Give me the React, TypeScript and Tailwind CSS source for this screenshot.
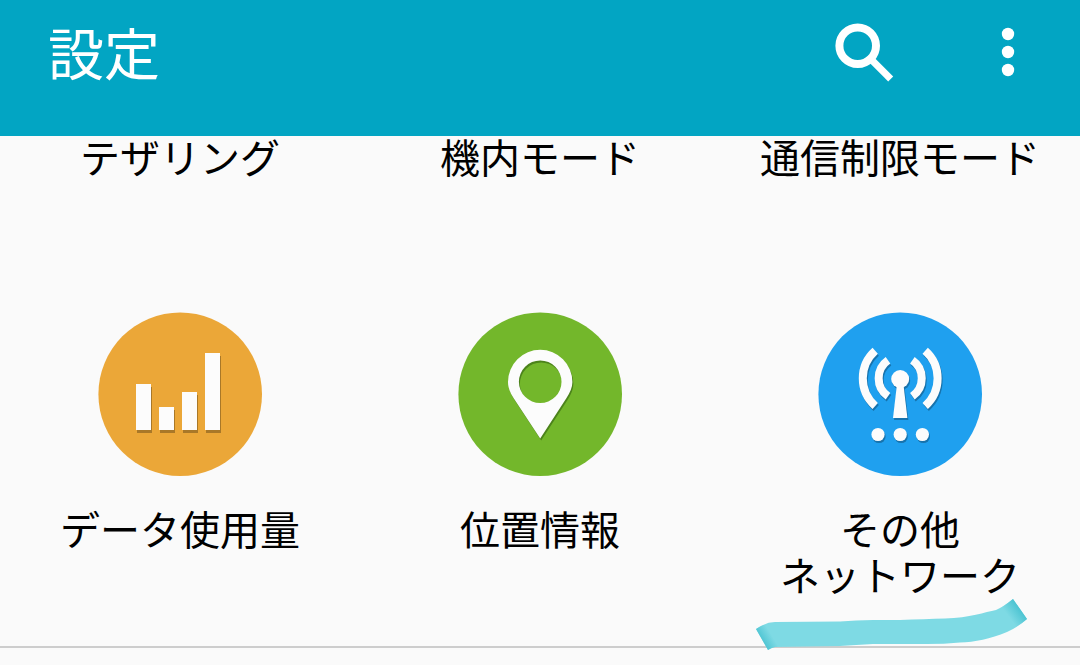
import type { ReactNode } from "react";

function SearchIcon() {
  return (
    <svg viewBox="0 0 72 72" className="size-[72px]" fill="none" stroke="#fff" aria-hidden="true">
      <circle cx="29.700" cy="29.700" r="18.300" strokeWidth="8" />
      <path d="M42 42.300 62.700 63" strokeWidth="7" />
    </svg>
  );
}

function MoreIcon() {
  return (
    <svg viewBox="0 0 72 72" className="size-[72px]" fill="#fff" aria-hidden="true">
      <circle cx="36" cy="18" r="6.2" />
      <circle cx="36" cy="36" r="6.2" />
      <circle cx="36" cy="54" r="6.2" />
    </svg>
  );
}

const bars = "M38 72h15v46h-15zM61 95h15v23h-15zM84 80h15v38h-15zM107 41h15v77h-15z";

function DataUsageIcon() {
  return (
    <svg viewBox="0 0 164 164" className="size-[164px]" aria-hidden="true">
      <circle cx="82.200" cy="82.200" r="81.800" fill="#eba738" />
      <path d={bars} transform="translate(1 3)" fill="#a97828" />
      <path d={bars} fill="#fcfcfc" />
    </svg>
  );
}

const pin =
  "M82.200 126.500 55.500 86C52 80.500 50 75.500 50 70a32.200 32.200 0 0 1 64.400 0C114.400 75.500 112 80.500 108.500 86ZM82.200 48.500a21.300 21.300 0 1 0 0 42.600a21.300 21.300 0 1 0 0 -42.600Z";

function LocationIcon() {
  return (
    <svg viewBox="0 0 164 164" className="size-[164px]" fillRule="evenodd" aria-hidden="true">
      <circle cx="82.200" cy="82.200" r="81.800" fill="#73b72b" />
      <path d={pin} transform="translate(1 2)" fill="#4c831b" />
      <path d={pin} fill="#fcfcfc" />
    </svg>
  );
}

function Antenna({ color }: { color: string }) {
  return (
    <g stroke={color} fill="none" strokeWidth="8">
      <path d="M57.200 38.700A37 37 0 0 0 57.200 94" />
      <path d="M107.200 38.700A37 37 0 0 1 107.200 94" />
      <path d="M70 48.300A22 22 0 0 0 70 84.300" />
      <path d="M94.400 48.300A22 22 0 0 1 94.400 84.300" />
      <g fill={color} stroke="none">
        <circle cx="82.200" cy="67" r="9" />
        <path d="M79 72h6.400l4 34h-14.400z" />
        <circle cx="60" cy="122.500" r="6.600" />
        <circle cx="82.200" cy="122.500" r="6.600" />
        <circle cx="104.400" cy="122.500" r="6.600" />
      </g>
    </g>
  );
}

function NetworkIcon() {
  return (
    <svg viewBox="0 0 164 164" className="size-[164px]" aria-hidden="true">
      <circle cx="82.200" cy="82.200" r="81.800" fill="#1fa0ef" />
      <g transform="translate(1 2)">
        <Antenna color="#1773ad" />
      </g>
      <Antenna color="#fcfcfc" />
    </svg>
  );
}

function MarkerStroke() {
  return (
    <svg
      viewBox="756 598 272 54"
      className="pointer-events-none absolute top-full left-9 -mt-0.5 h-[54px] w-[272px]"
      aria-hidden="true"
    >
      <defs>
        <linearGradient id="marker-start" gradientUnits="userSpaceOnUse" x1="761" y1="640" x2="771" y2="634">
          <stop offset="0" stopColor="#4dc4d2" />
          <stop offset="1" stopColor="#4dc4d2" stopOpacity="0" />
        </linearGradient>
        <linearGradient id="marker-end" gradientUnits="userSpaceOnUse" x1="1020" y1="609" x2="1009" y2="617">
          <stop offset="0" stopColor="#4dc4d2" />
          <stop offset="1" stopColor="#4dc4d2" stopOpacity="0" />
        </linearGradient>
        <path
          id="marker-shape"
          d="M756 629Q766 622 775 622L840 621.500Q856 620 873 620L900 620Q925 619 945 618.500C970 618 985 612 996 610Q1003 607 1013 599L1027 619Q1018 627 1007 632C990 639 975 642 960 642.500Q944 644 927 644L873 644Q856 645 840 646L775 647Q771 648 768 650Z"
        />
      </defs>
      <use href="#marker-shape" fill="#7edae4" />
      <use href="#marker-shape" fill="url(#marker-start)" />
      <use href="#marker-shape" fill="url(#marker-end)" />
    </svg>
  );
}

function Tile({ icon, children, marked }: { icon?: ReactNode; children: ReactNode; marked?: boolean }) {
  return (
    <li className="relative">
      <button type="button" className="flex w-full flex-col items-center gap-8 whitespace-nowrap">
        {icon}
        <span>{children}</span>
      </button>
      {marked && <MarkerStroke />}
    </li>
  );
}

export default function App() {
  return (
    <div className="min-h-screen bg-[#fafafa] font-['Liberation_Sans','Noto_Sans_CJK_JP',sans-serif] text-black">
      <header className="flex items-start justify-between bg-[#02a5c3] pt-4 pr-9 pb-10 pl-12 text-white">
        <h1 className="text-[56px] leading-[80px]">設定</h1>
        <div className="flex gap-[72px]">
          <button type="button" aria-label="検索">
            <SearchIcon />
          </button>
          <button type="button" aria-label="その他のオプション">
            <MoreIcon />
          </button>
        </div>
      </header>
      <main className="border-b-2 border-[#cdcdcd] pb-[46px]">
        <ul className="grid grid-cols-3 gap-y-[130px] text-[40px] leading-[46px]">
          <Tile>テザリング</Tile>
          <Tile>機内モード</Tile>
          <Tile>通信制限モード</Tile>
          <Tile icon={<DataUsageIcon />}>データ使用量</Tile>
          <Tile icon={<LocationIcon />}>位置情報</Tile>
          <Tile icon={<NetworkIcon />} marked>
            その他
            <br />
            ネットワーク
          </Tile>
        </ul>
      </main>
    </div>
  );
}
